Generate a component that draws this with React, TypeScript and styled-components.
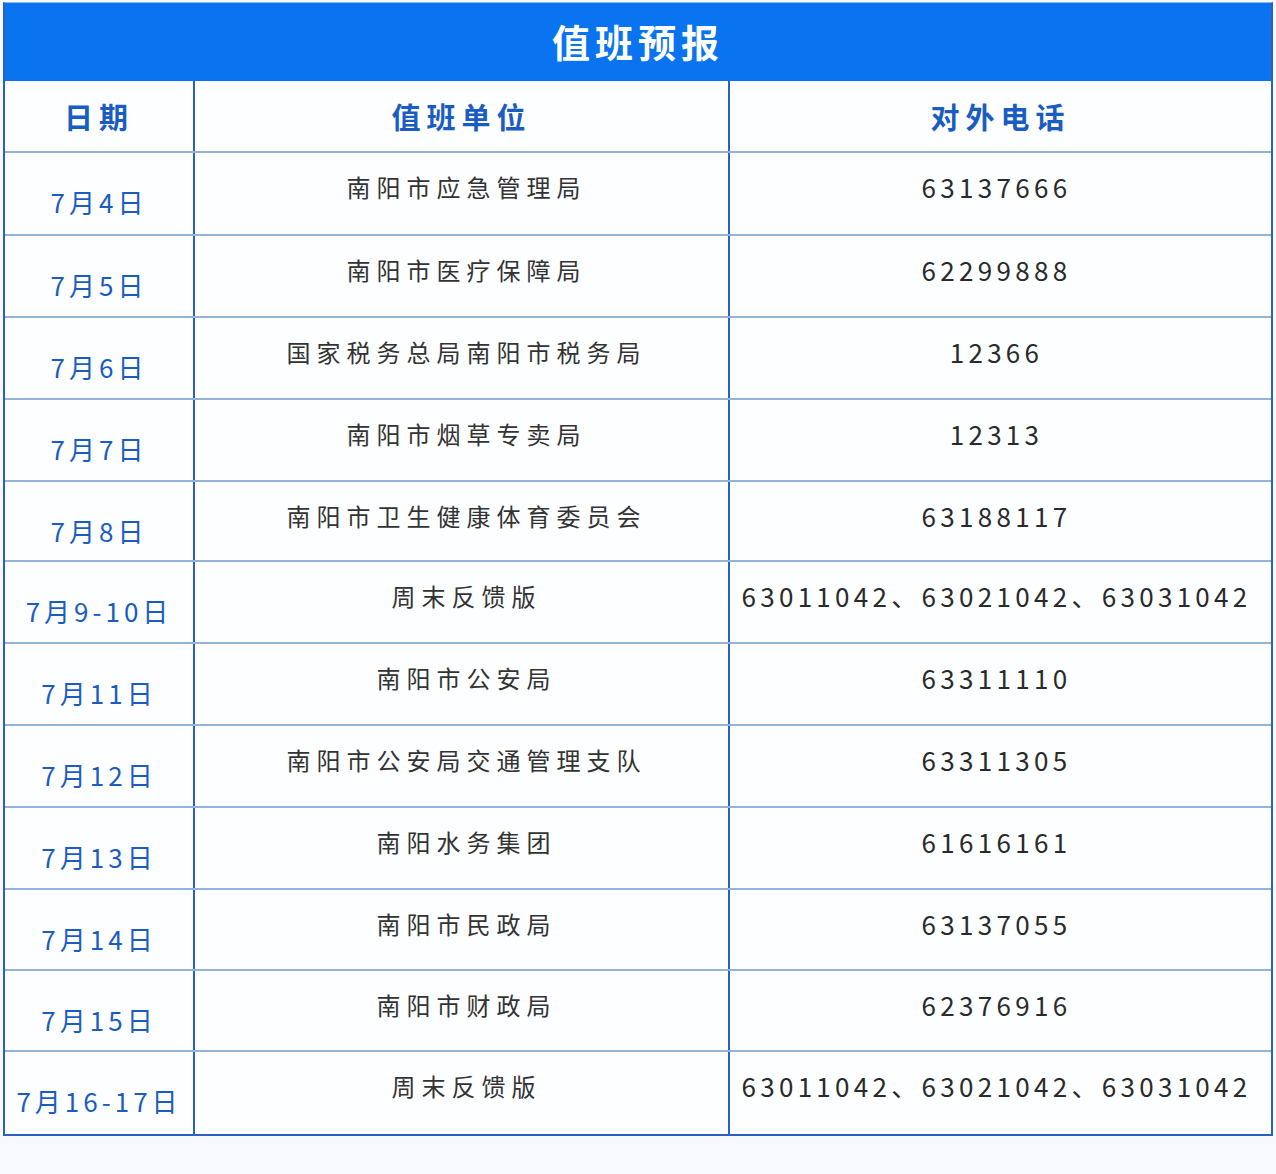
import styled, { createGlobalStyle } from "styled-components";

const GlobalStyle = createGlobalStyle`
  body {
    margin: 0;
    background: #f8f9fc;
    font-family: "Noto Sans CJK SC", "Noto Sans", sans-serif;
  }
`;

const Page = styled.div`
  width: 1276px;
  height: 1174px;
  padding: 2px 3px 0 3px;
  box-sizing: border-box;
`;

const Table = styled.div`
  width: 1270px;
  border-left: 2px solid #2c5fc4;
  border-right: 2px solid #2c5fc4;
  border-bottom: 2px solid #2c5fc4;
  border-top: 1px solid #8fb6ee;
  box-sizing: border-box;
  background: #fdfeff;
`;

const TitleBar = styled.div`
  height: 78px;
  background: #0a73ef;
  color: #fff;
  display: flex;
  align-items: center;
  justify-content: center;
  font-size: 38px;
  font-weight: 700;
  letter-spacing: 5px;
  padding-bottom: 4px;
  box-sizing: border-box;
`;

const Row = styled.div<{ $h: number; $last?: boolean }>`
  display: grid;
  grid-template-columns: 190px 535px 1fr;
  height: ${(p) => p.$h}px;
  border-bottom: ${(p) => (p.$last ? "none" : "2px solid #93b3dc")};
  box-sizing: border-box;
`;

const Cell = styled.div<{ $pt?: number; $last?: boolean }>`
  display: flex;
  justify-content: center;
  align-items: ${(p) => (p.$pt === undefined ? "center" : "flex-start")};
  padding-top: ${(p) => p.$pt ?? 0}px;
  border-right: ${(p) => (p.$last ? "none" : "2px solid #2c5fc4")};
  box-sizing: border-box;
  white-space: nowrap;
`;

const HeadText = styled.span`
  color: #1b5cc2;
  font-size: 29px;
  font-weight: 700;
  letter-spacing: 6px;
`;

const DateText = styled.span`
  color: #1b5cc2;
  font-size: 26px;
  letter-spacing: 4px;
`;

const UnitText = styled.span`
  color: #333;
  font-size: 24px;
  letter-spacing: 6px;
  padding-left: 10px;
`;

const PhoneText = styled.span`
  color: #2a2a2a;
  font-size: 26px;
  letter-spacing: 4.3px;
  padding-right: 8px;
`;

const rows = [
  { date: "7月4日", unit: "南阳市应急管理局", phone: "63137666", h: 83 },
  { date: "7月5日", unit: "南阳市医疗保障局", phone: "62299888", h: 82 },
  { date: "7月6日", unit: "国家税务总局南阳市税务局", phone: "12366", h: 82 },
  { date: "7月7日", unit: "南阳市烟草专卖局", phone: "12313", h: 82 },
  { date: "7月8日", unit: "南阳市卫生健康体育委员会", phone: "63188117", h: 80 },
  { date: "7月9-10日", unit: "周末反馈版", phone: "63011042、63021042、63031042", h: 82 },
  { date: "7月11日", unit: "南阳市公安局", phone: "63311110", h: 82 },
  { date: "7月12日", unit: "南阳市公安局交通管理支队", phone: "63311305", h: 82 },
  { date: "7月13日", unit: "南阳水务集团", phone: "61616161", h: 82 },
  { date: "7月14日", unit: "南阳市民政局", phone: "63137055", h: 81 },
  { date: "7月15日", unit: "南阳市财政局", phone: "62376916", h: 81 },
  { date: "7月16-17日", unit: "周末反馈版", phone: "63011042、63021042、63031042", h: 82 },
];

export default function App() {
  return (
    <>
      <GlobalStyle />
      <Page>
        <Table>
          <TitleBar>值班预报</TitleBar>
          <Row $h={72}>
            <Cell>
              <HeadText>日期</HeadText>
            </Cell>
            <Cell>
              <HeadText>值班单位</HeadText>
            </Cell>
            <Cell $last>
              <HeadText>对外电话</HeadText>
            </Cell>
          </Row>
          {rows.map((r, i) => (
            <Row key={i} $h={r.h} $last={i === rows.length - 1}>
              <Cell $pt={30}>
                <DateText>{r.date}</DateText>
              </Cell>
              <Cell $pt={16}>
                <UnitText>{r.unit}</UnitText>
              </Cell>
              <Cell $pt={15} $last>
                <PhoneText>{r.phone}</PhoneText>
              </Cell>
            </Row>
          ))}
        </Table>
      </Page>
    </>
  );
}
